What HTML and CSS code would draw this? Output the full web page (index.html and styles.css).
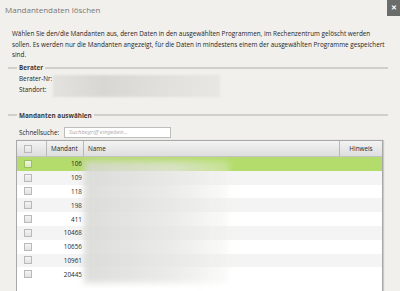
FILE: index.html
```html
<!DOCTYPE html>
<html lang="de">
<head>
  <meta charset="UTF-8" />
  <title>Mandantendaten löschen</title>
  <link rel="stylesheet" href="styles.css">
</head>
<body>
  <div id="dialog">
    <div class="titlebar">
      <span class="title">Mandantendaten löschen</span>
      <button class="close-btn">&#x2715;</button>
    </div>

    <p class="intro">
      Wählen Sie den/die Mandanten aus, deren Daten in den ausgewählten Programmen, im Rechenzentrum gelöscht werden<br>
      sollen. Es werden nur die Mandanten angezeigt, für die Daten in mindestens einem der ausgewählten Programme gespeichert<br>
      sind.
    </p>

    <div class="group">
      <div class="group-head first"><span class="group-label">Berater</span></div>
      <div class="berater">
        <div class="berater-labels">
          <div>Berater-Nr:</div>
          <div>Standort:</div>
        </div>
        <div class="blur-box"></div>
      </div>
    </div>

    <div class="group">
      <div class="group-head"><span class="group-label">Mandanten auswählen</span></div>
      <div class="search">
        <label>Schnellsuche:</label>
        <div class="search-input">Suchbegriff eingeben...</div>
      </div>

      <div class="table">
        <div class="row head">
          <div class="c-check"><span class="box"></span></div>
          <div class="c-nr">Mandant</div>
          <div class="c-name">Name</div>
          <div class="c-hint">Hinweis</div>
        </div>
        <div class="body">
          <div class="row selected"><div class="c-check"><span class="box"></span></div><div class="c-nr">106</div><div class="c-name"></div><div class="c-hint"></div></div>
          <div class="row odd"><div class="c-check"><span class="box"></span></div><div class="c-nr">109</div><div class="c-name"></div><div class="c-hint"></div></div>
          <div class="row"><div class="c-check"><span class="box"></span></div><div class="c-nr">118</div><div class="c-name"></div><div class="c-hint"></div></div>
          <div class="row odd"><div class="c-check"><span class="box"></span></div><div class="c-nr">198</div><div class="c-name"></div><div class="c-hint"></div></div>
          <div class="row"><div class="c-check"><span class="box"></span></div><div class="c-nr">411</div><div class="c-name"></div><div class="c-hint"></div></div>
          <div class="row odd"><div class="c-check"><span class="box"></span></div><div class="c-nr">10468</div><div class="c-name"></div><div class="c-hint"></div></div>
          <div class="row"><div class="c-check"><span class="box"></span></div><div class="c-nr">10656</div><div class="c-name"></div><div class="c-hint"></div></div>
          <div class="row odd"><div class="c-check"><span class="box"></span></div><div class="c-nr">10961</div><div class="c-name"></div><div class="c-hint"></div></div>
          <div class="row"><div class="c-check"><span class="box"></span></div><div class="c-nr">20445</div><div class="c-name"></div><div class="c-hint"></div></div>
          <div class="name-blur"></div>
        </div>
      </div>
    </div>
  </div>
</body>
</html>
```

FILE: styles.css
```css
body {
  margin: 0;
  background-color: #f1f0ec;
  font-family: "Open Sans", "Noto Sans", sans-serif;
  font-size: 6.35px;
  color: #262626;
  overflow: hidden;
  height: 291px;
}

#dialog {
  width: 400px;
  height: 291px;
}

.titlebar {
  display: flex;
  justify-content: space-between;
  align-items: flex-start;
  height: 21px;
}

.title {
  font-size: 8px;
  color: #777;
  line-height: 10px;
  padding: 5px 0 0 5px;
}

.close-btn {
  width: 13px;
  height: 16px;
  padding: 0;
  border: none;
  background-color: #6a6d6a;
  color: #fff;
  font-size: 7px;
  font-weight: bold;
}

.intro {
  margin: 8px 12px 0 12px;
  line-height: 10.5px;
  white-space: nowrap;
}

.group {
  margin: 0 12px 0 8px;
}

.group-head {
  display: flex;
  align-items: center;
  margin-top: 10.5px;
  height: 11px;
}

.group-head.first {
  margin-top: 1.5px;
}

.group-head::before {
  content: "";
  width: 9px;
  height: 2px;
  background-color: #cfcfcb;
}

.group-head::after {
  content: "";
  flex: 1;
  height: 2px;
  background-color: #cfcfcb;
}

.group-label {
  font-weight: bold;
  color: #3a3a3a;
  padding: 0 2px;
}

.berater {
  display: flex;
  padding: 1px 0 0 11px;
  height: 25px;
}

.berater-labels {
  width: 34px;
  line-height: 10.5px;
}

.blur-box {
  width: 167px;
  height: 22px;
  margin-top: 1px;
  background: linear-gradient(90deg, #e3e2de, #d8d7d3 30%, #e2e1dd 70%, #e8e7e3);
  filter: blur(1px);
}

.search {
  display: flex;
  align-items: center;
  margin-top: 5.5px;
  padding-left: 11px;
  height: 13px;
}

.search label {
  width: 45px;
}

.search-input {
  width: 101px;
  height: 9px;
  border: 1px solid #bdbdbd;
  background-color: #fff;
  color: #aaa;
  font-style: italic;
  font-size: 5.9px;
  line-height: 9px;
  padding-left: 4px;
}

.table {
  margin: 1px 0 0 8px;
  width: 367px;
  box-sizing: border-box;
  border-left: 1px solid #a8a8a8;
  border-right: 1px solid #a8a8a8;
  box-shadow: 1px 0 1px #c8c8c8;
  background-color: #fff;
  height: 160px;
}

.row {
  display: flex;
  height: 13.8px;
  align-items: center;
}

.row.head {
  height: 15px;
  border-top: 1px solid #a8a8a8;
  border-bottom: 1px solid #c4c4c4;
  background: linear-gradient(#f3f3f3, #dedede);
}

.row.head > div {
  height: 100%;
  display: flex;
  align-items: center;
  border-right: 1px solid #b8b8b8;
  box-sizing: border-box;
}

.row.head .c-hint {
  border-right: none;
  justify-content: center;
}

.row.head .c-nr,
.row.head .c-name {
  justify-content: flex-start;
  padding-left: 4px;
}

.c-check {
  width: 30px;
  display: flex;
  padding-left: 7px;
  box-sizing: border-box;
}

.c-nr {
  width: 37px;
  text-align: right;
  padding-right: 2px;
  box-sizing: border-box;
}

.c-name {
  width: 256px;
}

.c-hint {
  flex: 1;
}

.box {
  width: 6px;
  height: 6px;
  border: 1px solid #b9b9b9;
  background: linear-gradient(#f4f4f4, #e2e2e2);
}

.body {
  position: relative;
}

.row.odd {
  background-color: #f4f4f4;
}

.row.selected {
  background-color: #b4dc6c;
}

.row.selected .box {
  border-color: #9cbf62;
  background: linear-gradient(#eef6e0, #d8e9bb);
}

.name-blur {
  position: absolute;
  left: 67px;
  top: 4px;
  width: 145px;
  height: 122px;
  background: linear-gradient(90deg, rgba(215, 215, 212, 0.85), rgba(228, 228, 226, 0.75) 60%, rgba(242, 242, 240, 0.3));
  filter: blur(3px);
}
```
